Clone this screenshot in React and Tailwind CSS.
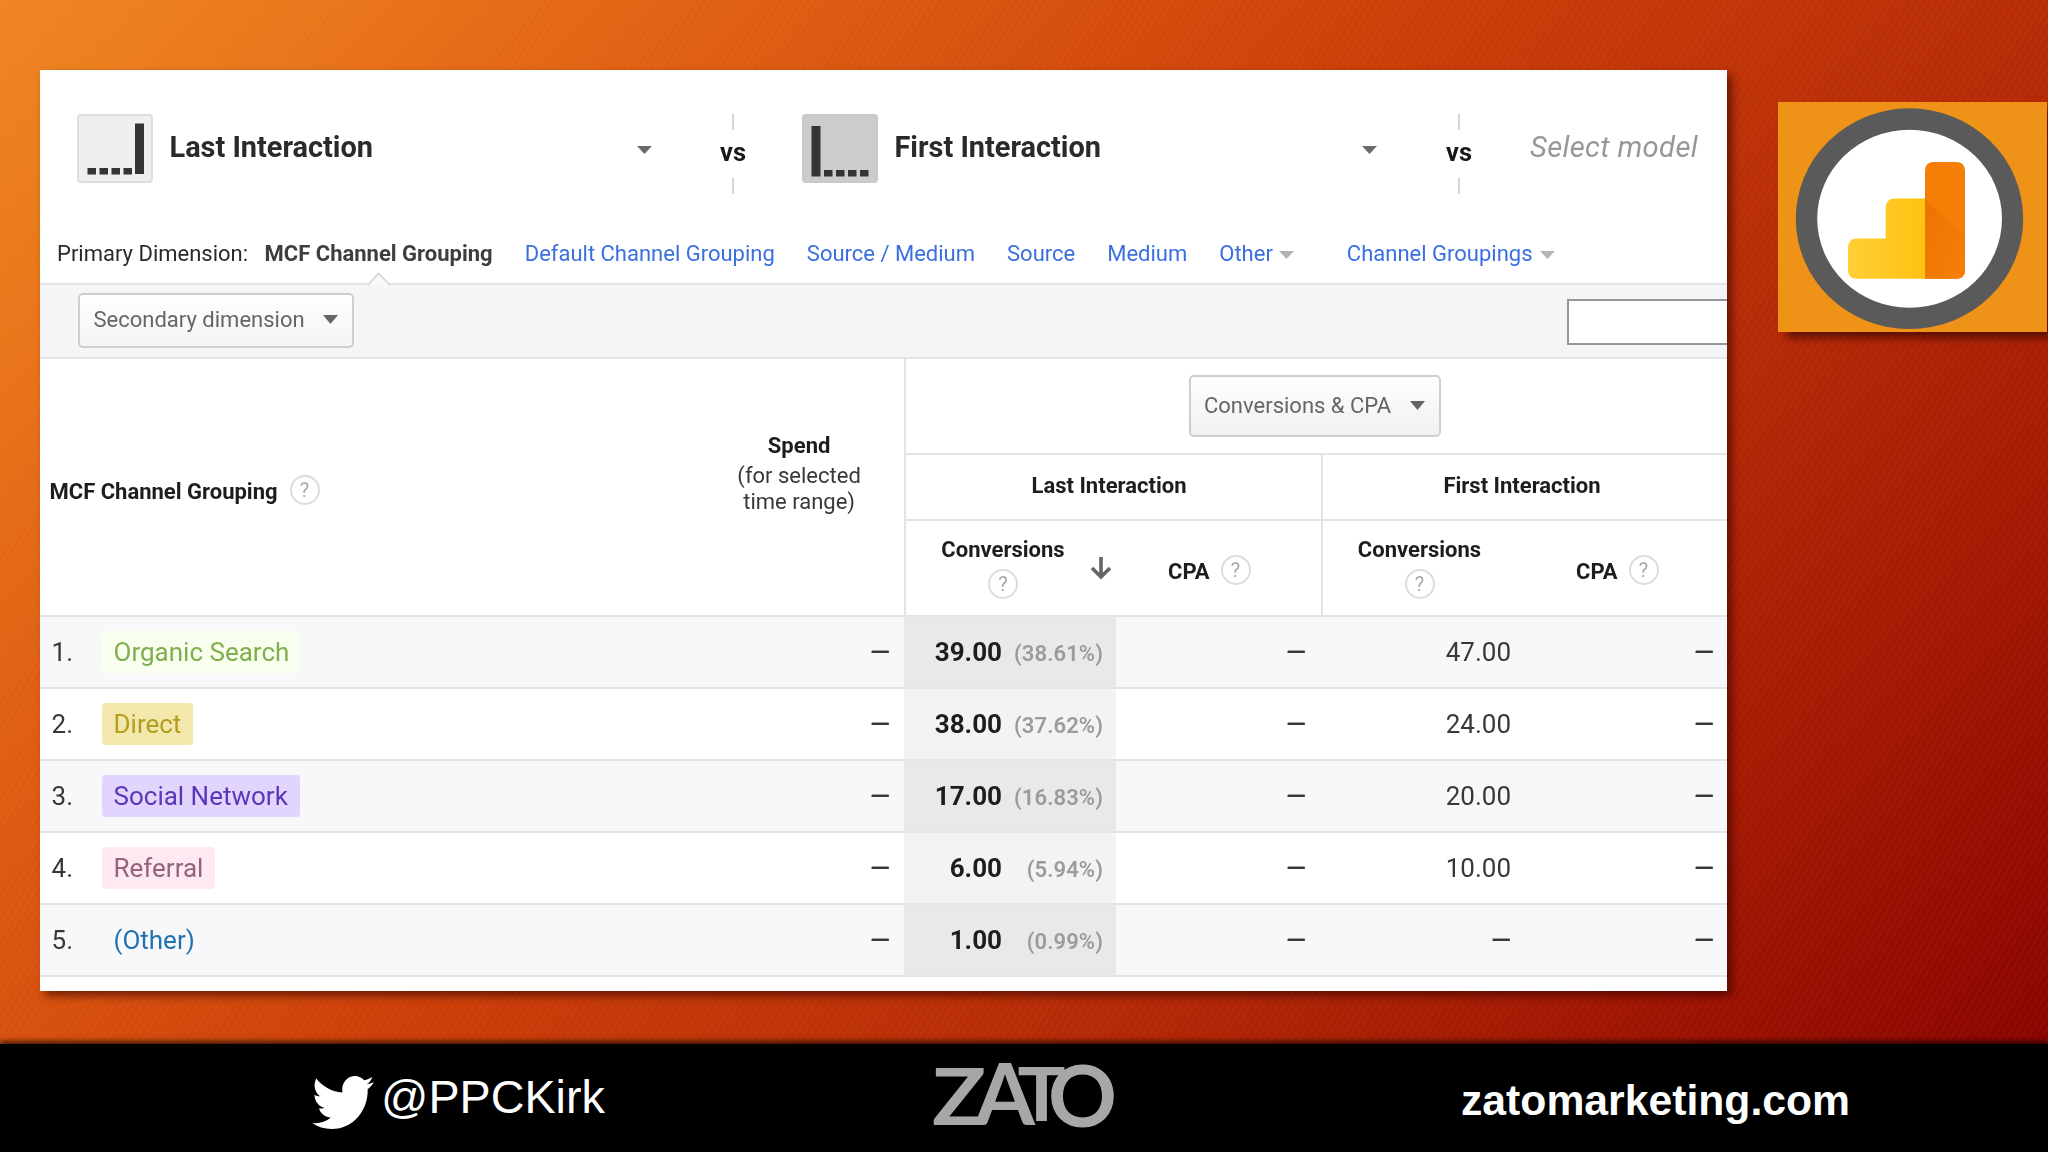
import React from "react";

const tabs = ["Default Channel Grouping", "Source / Medium", "Source", "Medium"];

const rows = [
  { n: 1, name: "Organic Search", pill: "bg-[#f9ffef] text-[#7fae4c]", last: "39.00", pct: "(38.61%)", first: "47.00" },
  { n: 2, name: "Direct", pill: "bg-[#f3e8ab] text-[#b39d1d]", last: "38.00", pct: "(37.62%)", first: "24.00" },
  { n: 3, name: "Social Network", pill: "bg-[#e1d4fd] text-[#5b37b7]", last: "17.00", pct: "(16.83%)", first: "20.00" },
  { n: 4, name: "Referral", pill: "bg-[#fee8f2] text-[#96637c]", last: "6.00", pct: "(5.94%)", first: "10.00" },
  { n: 5, name: "(Other)", pill: "text-[#1f73b0]", last: "1.00", pct: "(0.99%)", first: "—" },
];

function Caret({ className }) {
  return (
    <svg viewBox="0 0 14 8" preserveAspectRatio="none" className={className} fill="currentColor">
      <path d="M0 0H14L7 8Z" />
    </svg>
  );
}

function Help({ className = "" }) {
  return (
    <span className={`flex size-[30px] shrink-0 items-center justify-center rounded-full border-2 border-[#dddbde] text-[20px] leading-none text-[#aba9ac] ${className}`}>
      ?
    </span>
  );
}

function ModelTile({ kind }) {
  const last = kind === "last";
  return (
    <svg width="76" height="69" viewBox="0 0 76 69" className="shrink-0">
      <rect x="1" y="1" width="74" height="67" rx="3" fill={last ? "#f0eef0" : "#cdcbce"} stroke={last ? "#dfdddf" : "#cac8cb"} strokeWidth="2" />
      <g fill="#353335">
        {last ? <rect x="58" y="9.5" width="9" height="50.5" /> : <rect x="9.5" y="12" width="9" height="50.5" />}
        {[0, 1, 2, 3].map((i) => (
          <rect key={i} x={(last ? 10.5 : 22) + i * 12} y={last ? 54 : 56} width="8.5" height="6.5" />
        ))}
      </g>
    </svg>
  );
}

function Model({ kind, children }) {
  return (
    <div className="flex w-[575px] shrink-0 items-start">
      <ModelTile kind={kind} />
      <span className="mt-[13px] ml-[16.5px] flex-1 text-[28.9px] leading-10 font-bold text-[#2b292c]">{children}</span>
      <Caret className="mt-8 h-2 w-[15px] text-[#6b696c]" />
    </div>
  );
}

function Versus({ className }) {
  return (
    <div className={`flex w-10 shrink-0 flex-col items-center ${className}`}>
      <i className="h-4 w-[2px] bg-[#d8d6d9]" />
      <b className="mt-[2px] text-[25.5px] leading-10 text-[#19171a]">vs</b>
      <i className="mt-[6px] h-4 w-[2px] bg-[#d8d6d9]" />
    </div>
  );
}

function MetricHeads({ sorted }) {
  return (
    <>
      <div className="flex w-[124px] flex-col items-center pt-[15px]">
        <b className="leading-7">Conversions</b>
        <Help className="mt-[5px]" />
      </div>
      {sorted && (
        <svg width="22" height="24" viewBox="0 0 22 24" className="mt-[35px] ml-[25px]" fill="none" stroke="#666467" strokeWidth="3.6">
          <path d="M11 1V21M2 12L11 21L20 12" />
        </svg>
      )}
    </>
  );
}

function Panel() {
  return (
    <section className="mt-[70px] ml-[40px] h-[921px] w-[1687px] shrink-0 overflow-hidden bg-white text-[22px] text-[#1e1c1f]">
      <div className="h-[213px]">
        <div className="flex h-[169px] items-start pt-11 pl-[37px]">
          <Model kind="last">Last Interaction</Model>
          <Versus className="ml-[61px]" />
          <div className="ml-[49px]">
            <Model kind="first">First Interaction</Model>
          </div>
          <Versus className="ml-[62px]" />
          <span className="mt-[13px] ml-[51px] text-[29.2px] leading-10 tracking-[0.35px] whitespace-nowrap text-[#98969a] italic">Select model</span>
        </div>
        <nav className="flex pl-[17px] leading-[30px] whitespace-nowrap text-[#3b6fe0]">
          <span className="text-[#2b292c]">Primary Dimension:</span>
          <b className="relative ml-[16.5px] text-[#3f3d40]">
            MCF Channel Grouping
            <svg width="24" height="14" viewBox="0 0 24 14" className="absolute top-[33px] left-[102px]" fill="#fafafa">
              <path d="M1 13L11.5 1.5L23 13" stroke="#d6d4d7" strokeWidth="1.6" />
            </svg>
          </b>
          {tabs.map((t) => (
            <a key={t} className="ml-8">{t}</a>
          ))}
          <a className="ml-8">Other</a>
          <Caret className="mt-3 ml-[6px] h-2 w-[15px] text-[#b5b3b6]" />
          <a className="ml-[53px]">Channel Groupings</a>
          <Caret className="mt-3 ml-[7px] h-2 w-[15px] text-[#b5b3b6]" />
        </nav>
      </div>

      <div className="flex h-[76px] items-start justify-between border-y-2 border-[#e5e3e6] bg-[#f5f4f6] pl-[38px]">
        <button className="mt-2 flex h-[55px] w-[276px] items-center rounded-[5px] border-2 border-[#cfcdd0] bg-linear-to-b from-white to-[#f5f3f6] pb-[3px] pl-[13.5px] text-[#666467]">
          Secondary dimension
          <Caret className="ml-[18.5px] h-[9px] w-[15px]" />
        </button>
        <div className="mt-[14px] h-[46px] w-[160px] border-2 border-r-0 border-[#98969a] bg-white" />
      </div>

      <div className="flex h-[258px] border-b-2 border-[#e5e3e6]">
        <div className="flex w-[864px] items-start pl-[9.5px]">
          <b className="mt-[118px] leading-[30px]">MCF Channel Grouping</b>
          <Help className="mt-[116px] ml-3" />
          <div className="mt-[72px] ml-[400px] w-[159px] text-center leading-[26px]">
            <b className="block leading-[30px]">Spend</b>
            <span className="mt-[2px] block text-[#39373a]">(for selected<br />time range)</span>
          </div>
        </div>
        <div className="flex-1 border-l-2 border-[#e5e3e6]">
          <div className="flex h-24 items-start border-b-2 border-[#e5e3e6] pl-[283px]">
            <button className="mt-4 flex h-[62px] w-[252px] items-center rounded-[5px] border-2 border-[#cfcdd0] bg-linear-to-b from-white to-[#f1eff2] pb-px pl-[13px] whitespace-nowrap text-[#666467]">
              Conversions &amp; CPA
              <Caret className="ml-[19px] h-[9px] w-[15px]" />
            </button>
          </div>
          <div className="flex h-[162px]">
            <div className="w-[415px]">
              <div className="flex h-[66px] items-center justify-center border-b-2 border-[#e5e3e6] pr-[9px] pb-[3px] font-bold">Last Interaction</div>
              <div className="flex items-start pl-[35px]">
                <MetricHeads sorted />
                <b className="mt-[36px] ml-[56px] leading-[30px]">CPA</b>
                <Help className="mt-[34px] ml-[11px]" />
              </div>
            </div>
            <div className="h-[160px] flex-1 border-l-2 border-[#e5e3e6]">
              <div className="flex h-[66px] items-center justify-center border-b-2 border-[#e5e3e6] pr-[6px] pb-[3px] font-bold">First Interaction</div>
              <div className="flex items-start pl-[34.5px]">
                <MetricHeads />
                <b className="mt-[36px] ml-[94.5px] leading-[30px]">CPA</b>
                <Help className="mt-[34px] ml-[11px]" />
              </div>
            </div>
          </div>
        </div>
      </div>

      {rows.map((r) => (
        <div key={r.n} className="group flex h-[72px] items-center border-b-2 border-[#e5e3e6] text-[26px] leading-[30px] odd:bg-white even:bg-[#f8f7f9]">
          <div className="flex w-[864px] items-center">
            <span className="w-[61.5px] pl-[11.5px] text-[#39373a]">{r.n}.</span>
            <span className={`rounded-[4px] px-3 py-[6px] ${r.pill}`}>{r.name}</span>
            <span className="ml-auto pr-[14px] font-medium text-[#39373a]">—</span>
          </div>
          <div className="flex h-[70px] w-[212px] items-center justify-end pr-[13px] group-odd:bg-[#f3f2f4] group-even:bg-[#eae8ea]">
            <b>{r.last}</b>
            <span className="w-[101px] pt-[3px] text-right text-[22px] font-semibold tracking-[0.1px] text-[#9c9a9d]">{r.pct}</span>
          </div>
          <span className="w-[206px] pr-[16px] text-right font-medium text-[#39373a]">—</span>
          <span className={`w-[189px] text-right text-[#39373a] ${r.first === "—" ? "font-medium" : ""}`}>{r.first}</span>
          <span className="flex-1 pr-[13px] text-right font-medium text-[#39373a]">—</span>
        </div>
      ))}
    </section>
  );
}

function AnalyticsLogo() {
  return (
    <svg width="269" height="230" viewBox="0 0 269 230" className="mt-[102px] ml-[51px] shrink-0 bg-[#ee9318] shadow-[7px_8px_8px_-2px_rgba(40,0,0,0.6)]">
      <defs>
        <linearGradient id="step" x1="0" y1="0" x2="1" y2="0">
          <stop offset="0" stopColor="#ffcf38" />
          <stop offset="1" stopColor="#ffc10e" />
        </linearGradient>
        <linearGradient id="shade" x1="0" y1="0" x2="1" y2="1">
          <stop offset="0" stopColor="#ec7304" />
          <stop offset="1" stopColor="#f57f06" />
        </linearGradient>
      </defs>
      <ellipse cx="131.5" cy="116.7" rx="113.7" ry="110.4" fill="#5a5a5a" />
      <ellipse cx="131.6" cy="116.7" rx="92.4" ry="89" fill="#fff" />
      <path d="M70 146Q70 136.500 79 136.500H107.700V106Q107.700 96.500 117 96.500H150V176.700H79Q70 176.700 70 168Z" fill="url(#step)" />
      <path d="M147 69Q147 60 156 60H178Q187 60 187 69V168Q187 176.700 178 176.700H147Z" fill="#f57f06" />
      <path d="M147 97L187 134V168Q187 176.700 178 176.700H147Z" fill="url(#shade)" />
    </svg>
  );
}

function ZatoLogo() {
  return (
    <svg width="190" height="108" viewBox="0 0 190 108" className="ml-[328px] overflow-visible" fill="#a9a6a9" fontFamily="Lato" fontWeight="700">
      <text x="-2" y="81" fontSize="79" textLength="54" lengthAdjust="spacingAndGlyphs">Z</text>
      <text x="41" y="81" fontSize="86" textLength="60" lengthAdjust="spacingAndGlyphs">A</text>
      <text x="83.500" y="77" fontSize="74" textLength="48" lengthAdjust="spacingAndGlyphs">T</text>
      <text x="114" y="82.500" fontSize="87" textLength="69" lengthAdjust="spacingAndGlyphs">O</text>
    </svg>
  );
}

export default function App() {
  return (
    <div className="flex h-[1152px] w-[2048px] flex-col overflow-hidden bg-[repeating-linear-gradient(120deg,rgba(255,255,255,0.025)_0px,rgba(255,255,255,0.025)_2px,transparent_3px,transparent_6px),linear-gradient(135deg,#ef8522_0px,#e97519_250px,#e06013_500px,#cc3f08_1000px,#b52a06_1480px,#a01602_1850px,#8a0400_2186px)] font-[Roboto,sans-serif]">
      <main className="flex h-[1044px] shrink-0 items-start">
        <div className="drop-shadow-[5px_5px_4px_rgba(50,0,0,0.6)]">
          <Panel />
        </div>
        <AnalyticsLogo />
      </main>
      <footer className="flex h-[108px] items-start bg-black pl-[312px] font-['Liberation_Sans',Arial,sans-serif] text-white shadow-[0_-3px_5px_rgba(0,0,0,0.65)]">
        <svg width="62" height="53" viewBox="0 48 512 416" preserveAspectRatio="none" fill="currentColor" className="mt-[32px]">
          <path d="M459.37 151.716c.325 4.548.325 9.097.325 13.645 0 138.72-105.583 298.558-298.558 298.558-59.452 0-114.68-17.219-161.137-47.106 8.447.974 16.568 1.299 25.34 1.299 49.055 0 94.213-16.568 130.274-44.832-46.132-.975-84.792-31.188-98.112-72.772 6.498.974 12.995 1.624 19.818 1.624 9.421 0 18.843-1.3 27.614-3.573-48.081-9.747-84.143-51.98-84.143-102.985v-1.299c13.969 7.797 30.214 12.67 47.431 13.319-28.264-18.843-46.781-51.005-46.781-87.391 0-19.492 5.197-37.36 14.294-52.954 51.655 63.675 129.3 105.258 216.365 109.807-1.624-7.797-2.599-15.918-2.599-24.04 0-57.828 46.782-104.934 104.934-104.934 30.213 0 57.502 12.67 76.67 33.137 23.715-4.548 46.456-13.32 66.599-25.34-7.798 24.366-24.366 44.833-46.132 57.827 21.117-2.273 41.584-8.122 60.426-16.243-14.292 20.791-32.161 39.308-52.628 54.253z" />
        </svg>
        <span className="mt-[26px] ml-[7px] w-[225px] text-[46.700px] leading-[54px]">@PPCKirk</span>
        <ZatoLogo />
        <b className="mt-[31px] ml-[337px] text-[42.700px] leading-[50px]">zatomarketing.com</b>
      </footer>
    </div>
  );
}
